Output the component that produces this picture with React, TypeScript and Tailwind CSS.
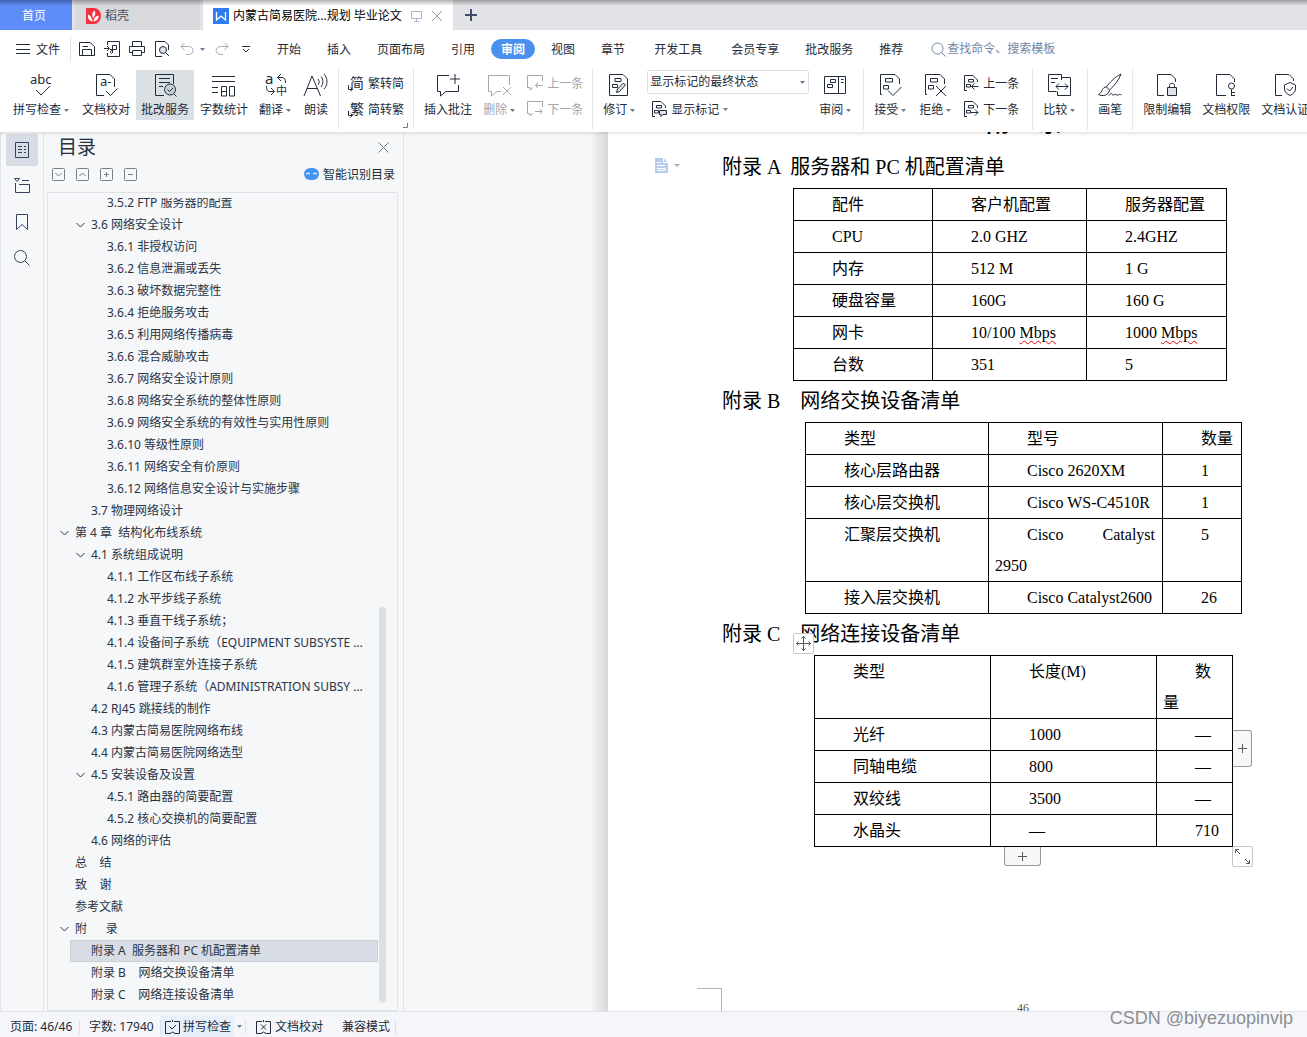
import type { ReactNode } from "react";

const MENU_TABS = ["开始", "插入", "页面布局", "引用", "审阅", "视图", "章节", "开发工具", "会员专享", "批改服务", "推荐"];

type TocItem = { text: string; level: 1 | 2 | 3; open?: boolean; selected?: boolean };

const TOC: TocItem[] = [
  { text: "3.5.2 FTP 服务器的配置", level: 3 },
  { text: "3.6 网络安全设计", level: 2, open: true },
  { text: "3.6.1 非授权访问", level: 3 },
  { text: "3.6.2 信息泄漏或丢失", level: 3 },
  { text: "3.6.3 破坏数据完整性", level: 3 },
  { text: "3.6.4 拒绝服务攻击", level: 3 },
  { text: "3.6.5 利用网络传播病毒", level: 3 },
  { text: "3.6.6 混合威胁攻击", level: 3 },
  { text: "3.6.7 网络安全设计原则", level: 3 },
  { text: "3.6.8 网络安全系统的整体性原则", level: 3 },
  { text: "3.6.9 网络安全系统的有效性与实用性原则", level: 3 },
  { text: "3.6.10 等级性原则", level: 3 },
  { text: "3.6.11 网络安全有价原则", level: 3 },
  { text: "3.6.12 网络信息安全设计与实施步骤", level: 3 },
  { text: "3.7 物理网络设计", level: 2 },
  { text: "第 4 章  结构化布线系统", level: 1, open: true },
  { text: "4.1 系统组成说明", level: 2, open: true },
  { text: "4.1.1 工作区布线子系统", level: 3 },
  { text: "4.1.2 水平步线子系统", level: 3 },
  { text: "4.1.3 垂直干线子系统；", level: 3 },
  { text: "4.1.4 设备间子系统（EQUIPMENT SUBSYSTE …", level: 3 },
  { text: "4.1.5 建筑群室外连接子系统", level: 3 },
  { text: "4.1.6 管理子系统（ADMINISTRATION SUBSY …", level: 3 },
  { text: "4.2 RJ45 跳接线的制作", level: 2 },
  { text: "4.3 内蒙古简易医院网络布线", level: 2 },
  { text: "4.4 内蒙古简易医院网络选型", level: 2 },
  { text: "4.5 安装设备及设置", level: 2, open: true },
  { text: "4.5.1 路由器的简要配置", level: 3 },
  { text: "4.5.2 核心交换机的简要配置", level: 3 },
  { text: "4.6 网络的评估", level: 2 },
  { text: "总    结", level: 1 },
  { text: "致    谢", level: 1 },
  { text: "参考文献", level: 1 },
  { text: "附      录", level: 1, open: true },
  { text: "附录 A  服务器和 PC 机配置清单", level: 2, selected: true },
  { text: "附录 B    网络交换设备清单", level: 2 },
  { text: "附录 C    网络连接设备清单", level: 2 },
];

const INDENT = { 1: "pl-[11px]", 2: "pl-[27px]", 3: "pl-[43px]" };

function Icon({ w = 24, h = 24, sw = 1, className = "", children }: { w?: number; h?: number; sw?: number; className?: string; children: ReactNode }) {
  return (
    <svg width={w} height={h} viewBox={`0 0 ${w} ${h}`} fill="none" stroke="currentColor" strokeWidth={sw} className={`shrink-0 overflow-visible ${className}`} aria-hidden="true">
      {children}
    </svg>
  );
}

function Caret({ className = "" }: { className?: string }) {
  return (
    <svg width="5" height="3" viewBox="0 0 5 3" className={`shrink-0 ${className}`} aria-hidden="true">
      <path d="M0 0H5L2.5 3Z" fill="#6b7a94" />
    </svg>
  );
}

function Glyph({ x, y, size, children }: { x: number; y: number; size: number; children: string }) {
  return (
    <text x={x} y={y} fontSize={size} fill="currentColor" stroke="none">
      {children}
    </text>
  );
}

/* Large ribbon button: icon above, label below */
function Tool({ label, icon, caret, active, muted }: { label: string; icon: ReactNode; caret?: boolean; active?: boolean; muted?: boolean }) {
  return (
    <button
      type="button"
      className={`flex h-[50px] shrink-0 flex-col items-center gap-[5px] px-[5px] pt-[3px] ${active ? "bg-[#dbe0e5]" : ""} ${muted ? "text-[#a3a6ab]" : ""}`}
    >
      {icon}
      <span className="flex items-center leading-4 whitespace-nowrap">
        {label}
        {caret && <Caret className="mr-[2px] ml-[3px]" />}
      </span>
    </button>
  );
}

function SmallTool({ label, icon, muted, caret }: { label: string; icon: ReactNode; muted?: boolean; caret?: boolean }) {
  return (
    <button type="button" className={`flex h-[26px] items-center gap-1 whitespace-nowrap ${muted ? "text-[#a3a6ab]" : ""}`}>
      {icon}
      <span className="pt-px">{label}</span>
      {caret && <Caret />}
    </button>
  );
}

function Divider() {
  return <div className="mx-1 h-[62px] w-px shrink-0 bg-[#e6e8eb]" />;
}

function Group({ children }: { children: ReactNode }) {
  return <div className="flex shrink-0 gap-px pt-[2px]">{children}</div>;
}

function PrevNext({ muted, icons }: { muted?: boolean; icons: [ReactNode, ReactNode] }) {
  return (
    <div className="flex shrink-0 flex-col px-1">
      <SmallTool label="上一条" muted={muted} icon={icons[0]} />
      <SmallTool label="下一条" muted={muted} icon={icons[1]} />
    </div>
  );
}

const revDoc = <path d="M3 21.5H1.5V1.5H16L20.5 6V11M6.5 5.5H13.5V9H6.5ZM4.5 12.5H9.5V16H4.5Z" />;
const revDocSmall = <path d="M4 15.5H1.5V.5H10L14.5 5V7M5.5 4.5H10.5V7H5.5ZM3.5 9.5H7.5V12H3.5Z" />;
const swapArrow = <path d="M.5 10V14.5H4M2.5 12.5L4.5 14.5L2.5 16" />;

function TitleBar() {
  return (
    <div className="relative flex h-[30px] shrink-0 bg-[#e1e3e7] text-[12px]">
      <button type="button" className="w-[72px] bg-[#5d8df8] pt-[2px] pr-1 text-white">首页</button>
      <button type="button" className="ml-[3px] flex w-[125px] items-center bg-[#d8dadd] pt-[2px] pl-[11px] text-[#444b57]">
        <svg width="15" height="16" viewBox="0 0 15 16" className="mr-1" aria-hidden="true">
          <path d="M0 0H8A7 8 0 0 1 8 16H0Z" fill="#f5313d" />
          <path d="M6.5 13.5C2 12 1.5 9.5 2 6.5C4.5 7.5 6 9.5 6.5 13.5ZM7 10C5.5 7 6 4.5 8.5 2.5C10 5 9.5 7.5 7 10ZM7.5 13.5C7.5 10.5 9.5 8 12.5 7.5C13 10.5 11 13 7.5 13.5Z" fill="#fff" />
        </svg>
        稻壳
      </button>
      <div className="ml-[3px] flex w-[250px] items-center bg-white pt-[2px] pl-[10px]">
        <svg width="16" height="16" viewBox="0 0 16 16" className="mr-1 shrink-0" aria-hidden="true">
          <path d="M0 0H16V16H0Z" fill="#2f7bf0" />
          <path d="M3.5 4V12L8 8L12.5 12V4" fill="none" stroke="#fff" strokeWidth="1.3" />
        </svg>
        <span className="whitespace-nowrap text-black">内蒙古简易医院...规划 毕业论文</span>
        <Icon w={12} h={12} className="ml-[9px] text-[#aab3c5]">
          <path d="M.5 1.5H10.5V8.5H.5ZM5.5 8.5V11M3 11.5H8" />
        </Icon>
        <button type="button" aria-label="关闭" className="ml-2 text-[#8d99b0]">
          <Icon w={12} h={12}><path d="M1 1L11 11M11 1L1 11" /></Icon>
        </button>
      </div>
      <button type="button" aria-label="新建" className="ml-3 text-[#3f4e6b]">
        <Icon w={12} h={12} sw={2}><path d="M6 0V12M0 6H12" /></Icon>
      </button>
      <div className="pointer-events-none absolute inset-x-0 top-0 h-[6px] bg-linear-to-b from-black/30 to-transparent" />
    </div>
  );
}

function MenuBar() {
  return (
    <div className="flex h-[38px] shrink-0 items-center bg-white text-[12px]">
      <button type="button" className="ml-4 flex items-center gap-[6px]">
        <Icon w={14} h={12}><path d="M0 1.5H14M0 6.5H14M0 10.5H14" /></Icon>
        <span className="pt-px">文件</span>
      </button>
      <div className="ml-[10px] h-6 w-px bg-[#dcdfe4]" />
      <div className="ml-2 flex w-[183px] items-center gap-[9px]">
        <button type="button" aria-label="保存">
          <Icon w={16} h={16}><path d="M.5 14.5V1.5H11L15.5 5.5V14.5ZM3.5 14.5V8.5H12.5V14.5M3.5 5.5H9" /></Icon>
        </button>
        <button type="button" aria-label="输出为PDF">
          <Icon w={16} h={16}><path d="M3.5 4V.5H15.5V15.5H3.5V12M0 7.5H5M3 5L5.5 7.5L3 10M8.5 12V4.5H12.5V8.5H6M8 12.5C6 12.5 6 9.5 8 9.5" /></Icon>
        </button>
        <button type="button" aria-label="打印">
          <Icon w={16} h={16}><path d="M3.5 5V.5H12.5V5M3.5 11.5H.5V5.5H15.5V11.5H12.5M3.5 9.5H12.5V14.5H3.5Z" /></Icon>
        </button>
        <button type="button" aria-label="打印预览">
          <Icon w={16} h={16}><path d="M8 15.5H1.5V.5H11L14.5 4V9" /><circle cx="9" cy="9" r="3.5" fill="#dfe3e8" /><path d="M12 12L15 15" /></Icon>
        </button>
        <button type="button" aria-label="撤销" className="ml-px flex items-center gap-[6px] text-[#a3a9b3]">
          <Icon w={14} h={14}><path d="M4.5 1L1 4.5L4.5 8M1 4.5H8.5C14.5 4.5 14.5 12.5 8.5 12.5H6" /></Icon>
          <Caret />
        </button>
        <button type="button" aria-label="恢复" className="ml-px text-[#a3a9b3]">
          <Icon w={14} h={14}><path d="M9.5 1L13 4.5L9.5 8M13 4.5H6C-.5 4.500 -.5 12.5 6 12.5H8" /></Icon>
        </button>
        <button type="button" aria-label="自定义快速访问工具栏" className="ml-1">
          <Icon w={8} h={8}><path d="M0 1.5H8M1 4L4 7L7 4" /></Icon>
        </button>
      </div>
      <nav className="ml-[2px] flex items-center">
        {MENU_TABS.map((tab) =>
          tab === "审阅" ? (
            <button key={tab} type="button" className="mx-[3px] h-5 rounded-full bg-[#4a90ee] px-[10px] pt-px font-bold text-white">
              {tab}
            </button>
          ) : (
            <button key={tab} type="button" className={`pt-[2px] whitespace-nowrap ${tab === "开发工具" ? "px-4" : "px-[13px]"}`}>
              {tab}
            </button>
          )
        )}
      </nav>
      <label className="ml-[15px] flex flex-1 items-center gap-px text-[#7485a3]">
        <Icon w={15} h={15}><circle cx="6.5" cy="6.5" r="5.5" /><path d="M10.5 10.5L14.5 14.5" /></Icon>
        <input type="text" aria-label="查找" placeholder="查找命令、搜索模板" className="w-full min-w-0 outline-none placeholder:text-[#7485a3]" />
      </label>
    </div>
  );
}

function Ribbon() {
  return (
    <div className="flex h-[64px] shrink-0 items-start gap-px overflow-hidden bg-white pl-2 text-[12px]">
      <Group>
        <Tool label="拼写检查" caret icon={<Icon><Glyph x={0} y={11} size={13}>abc</Glyph><path d="M6 17L11 22L20 13" /></Icon>} />
        <Tool
          label="文档校对"
          icon={<Icon><path d="M10 22.5H2.5V1.5H16L20.5 6V14" /><Glyph x={6} y={13} size={13}>a-</Glyph><path d="M12 18L16.5 22.5L23.5 15.5" /></Icon>}
        />
        <Tool
          label="批改服务"
          active
          icon={<Icon><path d="M11 22.5H2.5V1.5H20.5V11M6 5.5H17M6 9.5H17M6 13.5H10" /><circle cx="17" cy="16.5" r="5.5" fill="#c9ced5" /><path d="M14.5 16.5L16.5 18.5L20 15M20.5 20.5L23.5 23.5" /></Icon>}
        />
        <Tool label="字数统计" icon={<Icon><path d="M0 3.5H23M0 8.5H23M0 14.5H6M0 19.5H6M9.5 13.5H14.5V23H9.5ZM9.5 18.5H14.5M17.5 13.5H22.5V23H17.5Z" /></Icon>} />
        <Tool
          label="翻译"
          caret
          icon={<Icon><Glyph x={1} y={11} size={15}>a</Glyph><Glyph x={12} y={22} size={11}>中</Glyph><path d="M17 1L13.5 4.5L17 8M13.5 4.5H18C21 4.5 21.5 7 21.5 10M2.5 13C2.5 17 3.5 18.5 6 18.5H10M7 15L10.5 18.5L7 22" /></Icon>}
        />
        <Tool
          label="朗读"
          icon={<Icon><path d="M0 23L8 3L16.5 23M3 15.5H13.5M14 6C15.5 7.5 15.5 10 14 12M17 3.5C19.5 6.5 19.5 11 17 14M20 1C24 5.5 24 12 20 16" /></Icon>}
        />
      </Group>
      <Divider />
      <div className="flex shrink-0 flex-col px-1 pt-[2px]">
        <SmallTool label="繁转简" icon={<Icon w={16} h={16}><Glyph x={2} y={13} size={14}>简</Glyph>{swapArrow}</Icon>} />
        <SmallTool label="简转繁" icon={<Icon w={16} h={16}><Glyph x={2} y={13} size={14}>繁</Glyph>{swapArrow}</Icon>} />
        <Icon w={5} h={5} className="-mr-1 mt-px self-end text-[#6b7a94]"><path d="M4.5 0V4.5H0" /></Icon>
      </div>
      <Divider />
      <Group>
        <Tool label="插入批注" icon={<Icon><path d="M13 2.5H1.5V18.5H4.5V23L10 18.5H22.5V12M19 1V11M14 6H24" /></Icon>} />
        <Tool label="删除" caret muted icon={<Icon><path d="M21.5 12V2.5H.5V18.5H3.5V23L9 18.5H13M15 14L23 22M23 14L15 22" /></Icon>} />
        <PrevNext
          muted
          icons={[
            <Icon w={16} h={16}><path d="M15.5 6V.5H.5V12.5H3V15L6 12.5M15.5 10.5H8.5M11 8L8.5 10.5L11 13" /></Icon>,
            <Icon w={16} h={16}><path d="M15.5 6V.5H.5V12.5H3V15L6 12.5M8 10.5H15M12.5 8L15 10.5L12.5 13" /></Icon>,
          ]}
        />
      </Group>
      <Divider />
      <Group>
        <Tool
          label="修订"
          caret
          icon={<Icon><path d="M1.5 1.5H15L19.5 6V22.5H1.5ZM7 5.5H13V8.5H7ZM4.5 11.5H9.5V14.5H4.5Z" /><path d="M8.5 19.5L9.5 16L15.5 10L17.5 12L11.5 18.5Z" fill="#dfe3e8" /></Icon>}
        />
        <div className="flex w-[170px] flex-col px-1">
          <div className="relative flex items-center">
            <select aria-label="显示状态" defaultValue="final" className="h-6 w-full appearance-none rounded-[2px] border border-[#dcdfe3] bg-white pl-[2px] text-[12px]">
              <option value="final">显示标记的最终状态</option>
            </select>
            <Caret className="pointer-events-none absolute right-1" />
          </div>
          <div className="mt-[2px] pl-1">
            <SmallTool label="显示标记" caret icon={<Icon w={16} h={16}>{revDocSmall}<path d="M8.5 9.5H15.5V13.5H12L10 15.5V13.5H8.5Z" fill="#dfe3e8" /></Icon>} />
          </div>
        </div>
        <Tool label="审阅" caret icon={<Icon><path d="M.5 3.5H21.5V20.5H.5ZM14.5 3.5V20.5M6.5 6.5H11.5V9.5H6.5ZM3.5 11.5H8.5V14.5H3.5ZM17 6.5H19.5M17 9.5H19.5" /></Icon>} />
      </Group>
      <Divider />
      <Group>
        <Tool label="接受" caret icon={<Icon>{revDoc}<path d="M9 17.5L14 22.5L22.5 14" /></Icon>} />
        <Tool label="拒绝" caret icon={<Icon>{revDoc}<path d="M12 13L22 23M22 13L12 23" /></Icon>} />
        <div className="pr-1">
          <PrevNext
            icons={[
              <Icon w={16} h={16}>{revDocSmall}<path d="M15.5 11.5H8.5M11.5 8.5L8.5 11.5L11.5 14.5" /></Icon>,
              <Icon w={16} h={16}>{revDocSmall}<path d="M8 11.5H15M12 8.5L15 11.5L12 14.5" /></Icon>,
            ]}
          />
        </div>
      </Group>
      <Divider />
      <Group>
        <Tool label="比较" caret icon={<Icon><path d="M13.5 7V1.5H.5V18.5H8.5M3 5.5H10M3 9.5H7M13.5 4.5H22.5V22.5H9.5V18.5M8 13.5H20M11 10.5L8 13.5L11 16.5M17 10.5L20 13.5L17 16.5" /></Icon>} />
      </Group>
      <Divider />
      <Group>
        <Tool label="画笔" icon={<Icon><path d="M23 1C17 4 11 10 8.5 14L11.5 17C16 13 21 7 23 1ZM8.5 14C4 13.5 5 19 .5 21.5C5 24 11 22 11.5 17M11 22.5C13 19.5 14 20 14.5 22C16 23 16.5 20 18 21.5C19 24 21 20 23.5 22" /></Icon>} />
      </Group>
      <Divider />
      <Group>
        <Tool label="限制编辑" icon={<Icon><path d="M9 22.5H2.5V1.5H16L20.5 6V9M14.5 15V12.5C14.5 9.5 19.5 9.5 19.5 12.5V15" /><path d="M12.5 14.5H21.5V22.5H12.5Z" fill="#dfe3e8" /></Icon>} />
        <Tool label="文档权限" icon={<Icon><path d="M12 22.5H2.5V1.5H16L20.5 6V9" /><circle cx="17.5" cy="13" r="3" /><path d="M17.5 16V23M17.5 19.5H21M17.5 22.5H21" /></Icon>} />
        <Tool label="文档认证" icon={<Icon><path d="M9 22.5H2.5V1.5H16L20.5 6V8M11.5 12L17 9.5L22.5 12V16C22.5 19 20 21 17 22.5C14 21 11.5 19 11.5 16ZM14 15.5L16.5 18L20 14" /></Icon>} />
      </Group>
    </div>
  );
}

function SideRail() {
  const icons = [
    { label: "目录", d: "M1.5 .5H14.5V15.5H1.5ZM4 4.5H8M10 4.5H12M4 7.5H8M10 7.5H12M4 10.5H8M10 10.5H12" },
    { label: "章节", d: "M.5 .5H5.5L3 3.5ZM8 2.5H15M1.5 5V14.5H15.5V6.5H5" },
    { label: "书签", d: "M2.5 .5H13.5V15.5L8 10.5L2.5 15.5Z" },
    { label: "查找", d: "M12.5 6.5A6 6 0 1 1 .5 6.5A6 6 0 1 1 12.5 6.5M11 11L15.5 15.5" },
  ];
  return (
    <aside className="flex w-11 shrink-0 flex-col items-center gap-1 border-x border-[#e0e3e8] pt-[2px] text-[#33415c]">
      {icons.map((it, i) => (
        <button key={it.label} type="button" aria-label={it.label} className={`flex size-8 items-center justify-center rounded-[2px] ${i === 0 ? "bg-[#d8dce4]" : ""}`}>
          <Icon w={16} h={16}><path d={it.d} /></Icon>
        </button>
      ))}
    </aside>
  );
}

function TocPanel() {
  const boxes = [
    ["展开", "M3.5 5L6.5 8L9.5 5"],
    ["收起", "M3.5 8L6.5 5L9.5 8"],
    ["增加", "M6.5 4V9M4 6.5H9"],
    ["减少", "M4 6.5H9"],
  ];
  return (
    <section className="flex w-[360px] shrink-0 flex-col border-r border-[#e0e3e8] pr-[5px] pl-[3px] text-[12px]">
      <div className="flex h-[30px] items-center justify-between pr-[9px] pl-[11px]">
        <h2 className="text-[19px] text-[#27303f]">目录</h2>
        <button type="button" aria-label="关闭" className="text-[#6b7a94]">
          <Icon w={11} h={11}><path d="M.5 .5L10.5 10.5M10.5 .5L.5 10.5" /></Icon>
        </button>
      </div>
      <div className="flex h-6 items-center pr-[3px] pl-[5px]">
        <div className="flex gap-[11px] text-[#7b7f87]">
          {boxes.map(([label, d]) => (
            <button key={label} type="button" aria-label={label}>
              <Icon w={13} h={13}><rect x=".5" y=".5" width="12" height="12" rx="1" /><path d={d} /></Icon>
            </button>
          ))}
        </div>
        <button type="button" className="ml-auto flex items-center gap-1">
          <svg width="15" height="12" viewBox="0 0 15 12" aria-hidden="true">
            <rect x="0" y="0" width="15" height="12" rx="6" fill="#4393f0" />
            <path d="M2.5 6.5A1.5 1.5 0 0 1 5.5 6.5M9.5 6.5A1.5 1.5 0 0 1 12.5 6.5" fill="none" stroke="#fff" strokeWidth="1.2" />
          </svg>
          <span className="pt-px">智能识别目录</span>
        </button>
      </div>
      <div className="mt-[6px] flex min-h-0 flex-1 rounded-[2px] border border-[#dfe2e7] pt-[5px] pr-[11px]">
        <ul className="min-w-0 flex-1 overflow-hidden pl-4">
          {TOC.map((item, i) => (
            <li key={item.text} className={i === 0 ? "-mt-[6px]" : ""}>
              <a
                href="#doc"
                className={`relative ml-[6px] flex h-[22px] items-center whitespace-pre text-[#2b3445] ${item.selected ? "bg-[#d8dce4] outline-1 -outline-offset-1 outline-[#c9d0d8]" : ""}`}
              >
                <span className={`-ml-[6px] ${INDENT[item.level]}`}>{item.text}</span>
                {item.open && (
                  <Icon w={9} h={6} className={`absolute ${item.level === 1 ? "-left-[10px]" : "left-[6px]"}`}>
                    <path d="M.5 1L4.5 5L8.5 1" />
                  </Icon>
                )}
              </a>
            </li>
          ))}
        </ul>
        <div className="ml-px flex w-[7px] flex-col justify-end pb-[7px]">
          <div className="h-[396px] rounded-full bg-[#dde0e3]" />
        </div>
      </div>
    </section>
  );
}

function DocTable({ widths, head, rows, className }: { widths: string[]; head: string[]; rows: ReactNode[][]; className: string }) {
  const cell = "h-8 border border-black pr-[7px] pl-[6px] text-justify indent-8 align-top font-normal leading-[31px]";
  return (
    <table className={`table-fixed border-collapse text-[16px] ${className}`}>
      <colgroup>
        {widths.map((w, i) => <col key={i} className={w} />)}
      </colgroup>
      <thead>
        <tr>{head.map((h) => <th key={h} scope="col" className={cell}>{h}</th>)}</tr>
      </thead>
      <tbody>
        {rows.map((r, i) => (
          <tr key={i}>{r.map((c, j) => <td key={j} className={cell}>{c}</td>)}</tr>
        ))}
      </tbody>
    </table>
  );
}

const mbps = <span className="underline decoration-red-600 decoration-wavy decoration-1 underline-offset-2">Mbps</span>;

function DocHeading({ children }: { children: string }) {
  return <h3 className="h-[41px] text-[20px] leading-[41px] whitespace-pre">{children}</h3>;
}

function DocumentPage() {
  return (
    <article
      id="doc"
      className="relative flex min-w-0 flex-1 flex-col overflow-hidden bg-white pl-[114px] font-['Liberation_Serif','Noto_Sans_CJK_SC',serif] text-black"
    >
      <h1 className="-mt-[21px] flex h-[36px] gap-7 pl-[264px] text-[24px] leading-6 font-bold">
        <span>附</span>
        <span>录</span>
      </h1>
      <DocHeading>附录 A  服务器和 PC 机配置清单</DocHeading>
      <DocTable
        className="ml-[71px] w-[434px]"
        widths={["w-[139px]", "w-[154px]", "w-[140px]"]}
        head={["配件", "客户机配置", "服务器配置"]}
        rows={[
          ["CPU", "2.0 GHZ", "2.4GHZ"],
          ["内存", "512 M", "1 G"],
          ["硬盘容量", "160G", "160 G"],
          ["网卡", <>10/100 {mbps}</>, <>1000 {mbps}</>],
          ["台数", "351", "5"],
        ]}
      />
      <DocHeading>附录 B    网络交换设备清单</DocHeading>
      <DocTable
        className="ml-[83px] w-[437px]"
        widths={["w-[183px]", "w-[174px]", "w-[79px]"]}
        head={["类型", "型号", "数量"]}
        rows={[
          ["核心层路由器", "Cisco 2620XM", "1"],
          ["核心层交换机", "Cisco WS-C4510R", "1"],
          ["汇聚层交换机", "Cisco Catalyst 2950", "5"],
          ["接入层交换机", "Cisco Catalyst2600", "26"],
        ]}
      />
      <DocHeading>附录 C    网络连接设备清单</DocHeading>
      <div className="relative ml-[92px] w-[419px] text-[#55585e]">
        <DocTable
          className="w-[419px] text-black"
          widths={["w-[176px]", "w-[166px]", "w-[76px]"]}
          head={["类型", "长度(M)", "数量"]}
          rows={[
            ["光纤", "1000", "—"],
            ["同轴电缆", "800", "—"],
            ["双绞线", "3500", "—"],
            ["水晶头", "—", "710"],
          ]}
        />
        <button type="button" aria-label="移动表格" className="absolute -top-[22px] -left-[21px] rounded-[2px] border border-[#c8c8c8] bg-white p-px">
          <Icon w={17} h={17}><path d="M8.5 1V16M1 8.5H16M6.5 3.5L8.5 1.5L10.5 3.5M6.5 13.5L8.5 15.5L10.5 13.5M3.5 6.5L1.5 8.5L3.5 10.5M13.5 6.5L15.5 8.5L13.5 10.5" /></Icon>
        </button>
        <button type="button" aria-label="添加列" className="absolute top-[75px] left-full flex h-[37px] w-[19px] items-center justify-center rounded-r-[3px] border border-l-0 border-[#999] bg-[#f7f7f7]">
          <Icon w={9} h={9}><path d="M4.5 0V9M0 4.5H9" /></Icon>
        </button>
        <button type="button" aria-label="添加行" className="absolute top-full left-[190px] flex h-[19px] w-[37px] items-center justify-center rounded-b-[3px] border border-t-0 border-[#999] bg-[#f7f7f7]">
          <Icon w={9} h={9}><path d="M4.5 0V9M0 4.5H9" /></Icon>
        </button>
        <button type="button" aria-label="调整大小" className="absolute top-full left-full -mt-px -ml-px rounded-[2px] border border-[#c8c8c8] bg-white p-px">
          <Icon w={17} h={17}><path d="M6 6L2 2M1.5 5V1.5H5M11 11L15 15M15.5 12V15.5H12" /></Icon>
        </button>
      </div>
      <div className="mt-auto flex h-[23px] text-[12px] text-[#555]">
        <div className="-ml-[25px] w-[25px] border-t border-r border-[#b5b5b5]" />
        <span className="ml-[295px] pt-[11px]">46</span>
      </div>
      <button type="button" aria-label="段落布局" className="absolute top-[26px] left-[47px] flex items-center gap-[6px]">
        <svg width="13" height="15" viewBox="0 0 13 15" aria-hidden="true">
          <path d="M0 0H8.5L13 4.5V15H0Z" fill="#b9cdea" />
          <path d="M8.5 0V4.5H13M2 4.5H6M2 7.5H10M2 10.5H10V12.5H2" fill="none" stroke="#fff" />
        </svg>
        <svg width="6" height="3" viewBox="0 0 6 3" aria-hidden="true"><path d="M0 0H6L3 3Z" fill="#a9adb3" /></svg>
      </button>
    </article>
  );
}

function StatusBar() {
  const sep = <div className="h-[14px] w-px bg-[#dcdfe4]" />;
  return (
    <footer className="relative flex h-[26px] shrink-0 items-center border-t border-[#e0e3e8] bg-[#f5f6f9] pt-1 pl-[10px] text-[12px] whitespace-nowrap">
      <span className="w-[69px]">页面: 46/46</span>
      {sep}
      <span className="w-20 pl-[9px]">字数: 17940</span>
      {sep}
      <button type="button" className="flex h-[22px] w-[73px] items-center gap-[3px] bg-[#e7effa] pl-1">
        <Icon w={15} h={14}><path d="M6 1.5H.5V13.5H5L7.5 12L10 13.5H14.5V1.5H9M7.5 0V2M4.5 6.5L7 9L11 5" /></Icon>
        拼写检查
      </button>
      <Caret className="mx-[3px]" />
      {sep}
      <button type="button" className="ml-[10px] flex items-center gap-1">
        <Icon w={15} h={14}><path d="M6 1.5H.5V13.5H5L7.5 12L10 13.5H14.5V1.5H9M7.5 0V2M5 4.5L10 9.5M10 4.5L5 9.5" /></Icon>
        文档校对
      </button>
      <span className="mr-[5px] ml-[19px]">兼容模式</span>
      {sep}
      <span className="absolute -top-2 right-[14px] font-['Liberation_Sans',sans-serif] text-[18px] leading-7 text-[#8c8e92]">CSDN @biyezuopinvip</span>
    </footer>
  );
}

export default function App() {
  return (
    <div className="flex h-screen flex-col overflow-hidden bg-white font-['Noto_Sans','Noto_Sans_CJK_SC',sans-serif] text-[#222b3a]">
      <TitleBar />
      <MenuBar />
      <Ribbon />
      <main className="relative flex min-h-0 flex-1 bg-[#f5f7f9]">
        <SideRail />
        <TocPanel />
        <div className="flex w-[204px] shrink-0 justify-end">
          <div className="w-[18px] bg-linear-to-r from-transparent to-[#d6d8da]" />
        </div>
        <DocumentPage />
        <div className="pointer-events-none absolute inset-x-0 top-0 h-1 bg-linear-to-b from-black/10 to-transparent" />
      </main>
      <StatusBar />
    </div>
  );
}
